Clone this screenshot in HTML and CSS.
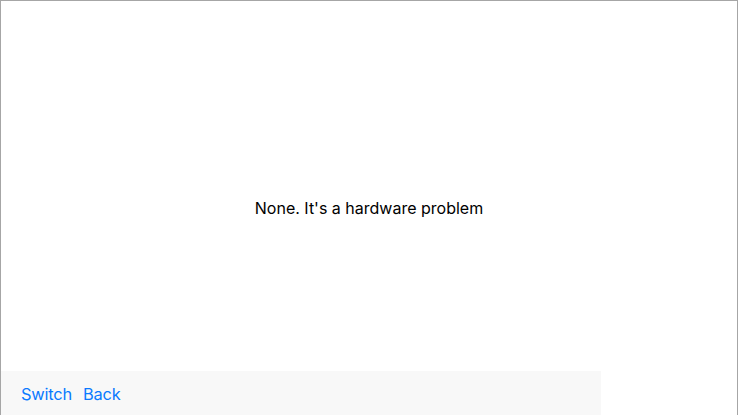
FILE: index.html
```html
<!DOCTYPE html>
<html>
<head>
<meta charset="utf-8">
<link rel="stylesheet" href="styles.css">
</head>
<body>
<div class="frame">
  <div class="content">
    <p class="message">None. It's a hardware problem</p>
  </div>
  <div class="toolbar">
    <a class="link" href="#">Switch</a>
    <a class="link" href="#">Back</a>
  </div>
</div>
</body>
</html>
```
FILE: styles.css
```css
html, body {
  margin: 0;
  padding: 0;
  background: #ffffff;
}
.frame {
  box-sizing: border-box;
  width: 738px;
  height: 415px;
  border-top: 1px solid #a6a6a6;
  border-left: 1px solid #a6a6a6;
  border-right: 1px solid #a6a6a6;
  display: grid;
  grid-template: 1fr / 1fr;
  font-family: Inter, Roboto, "Liberation Sans", sans-serif;
}
.content {
  grid-area: 1 / 1;
  display: flex;
  align-items: center;
  justify-content: center;
}
.message {
  margin: 0;
  font-size: 16px;
  color: #000;
}
.toolbar {
  grid-area: 1 / 1;
  align-self: end;
  width: 600px;
  height: 44px;
  background: #f8f8f8;
  display: flex;
  align-items: center;
  gap: 11px;
  padding-left: 20px;
  padding-top: 1px;
  box-sizing: border-box;
}
.link {
  color: #0a7aff;
  text-decoration: none;
  font-size: 16.4px;
  letter-spacing: -0.2px;
}
```
